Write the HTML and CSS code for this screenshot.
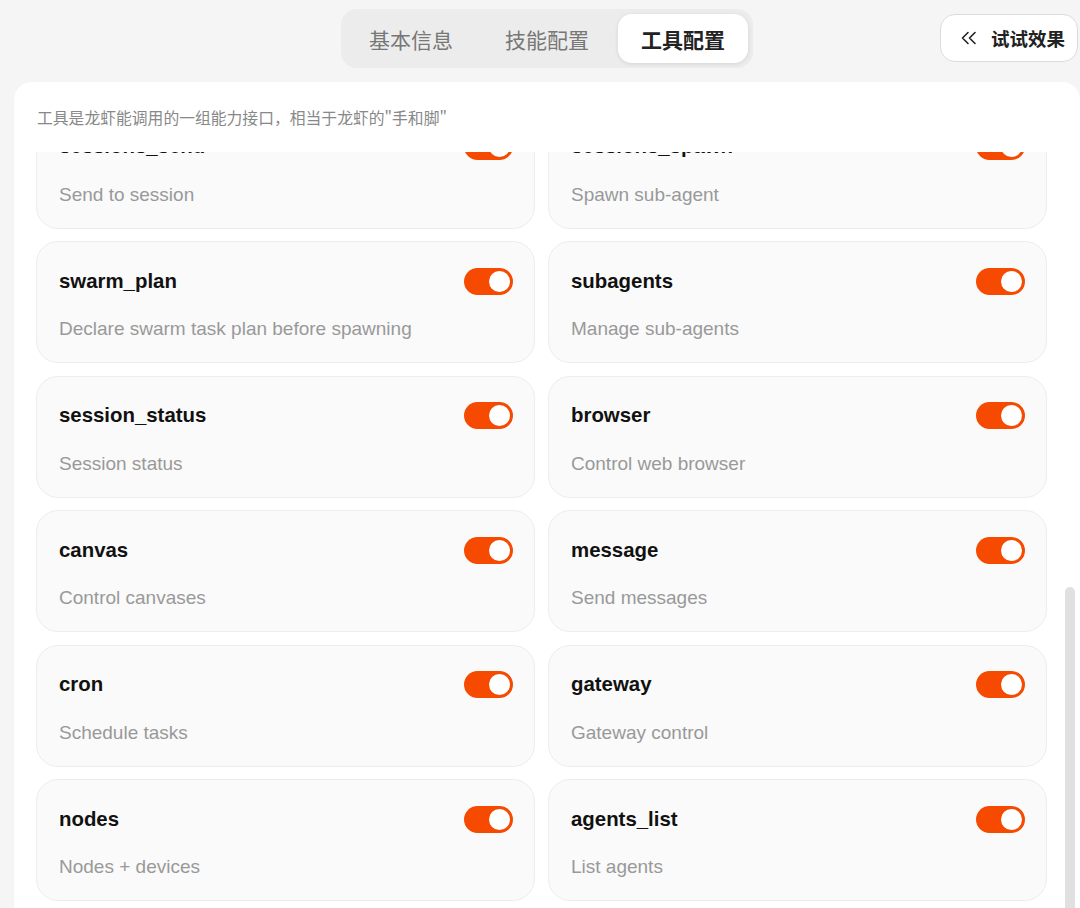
FILE: index.html
```html
<!DOCTYPE html>
<html lang="zh-CN">
    <head>
        <meta charset="UTF-8" />
        <meta name="viewport" content="width=device-width, initial-scale=1.0" />
        <title>工具配置</title>
        <link rel="stylesheet" href="styles.css">
    </head>
    <body>
        <header class="topbar">
            <div class="spacer"></div>
            <nav class="tabs">
                <span class="tab">基本信息</span>
                <span class="tab">技能配置</span>
                <span class="tab active">工具配置</span>
            </nav>
            <div class="actions">
                <button class="try-btn">
                    <svg width="18" height="14" viewBox="0 0 18 14">
                        <path d="M8 1.5 L2.5 7 L8 12.5 M15 1.5 L9.5 7 L15 12.5" fill="none" stroke="#222" stroke-width="1.6" stroke-linecap="round" stroke-linejoin="round" />
                    </svg>
                    <span>试试效果</span>
                </button>
            </div>
        </header>

        <main class="panel">
            <p class="intro">工具是龙虾能调用的一组能力接口，相当于龙虾的"手和脚"</p>
            <div class="viewport">
                <div class="tool-grid">
                    <div class="tool">
                        <div class="tool-head"><h3>sessions_send</h3><span class="switch"></span></div>
                        <p>Send to session</p>
                    </div>
                    <div class="tool">
                        <div class="tool-head"><h3>sessions_spawn</h3><span class="switch"></span></div>
                        <p>Spawn sub-agent</p>
                    </div>
                    <div class="tool">
                        <div class="tool-head"><h3>swarm_plan</h3><span class="switch"></span></div>
                        <p>Declare swarm task plan before spawning</p>
                    </div>
                    <div class="tool">
                        <div class="tool-head"><h3>subagents</h3><span class="switch"></span></div>
                        <p>Manage sub-agents</p>
                    </div>
                    <div class="tool">
                        <div class="tool-head"><h3>session_status</h3><span class="switch"></span></div>
                        <p>Session status</p>
                    </div>
                    <div class="tool">
                        <div class="tool-head"><h3>browser</h3><span class="switch"></span></div>
                        <p>Control web browser</p>
                    </div>
                    <div class="tool">
                        <div class="tool-head"><h3>canvas</h3><span class="switch"></span></div>
                        <p>Control canvases</p>
                    </div>
                    <div class="tool">
                        <div class="tool-head"><h3>message</h3><span class="switch"></span></div>
                        <p>Send messages</p>
                    </div>
                    <div class="tool">
                        <div class="tool-head"><h3>cron</h3><span class="switch"></span></div>
                        <p>Schedule tasks</p>
                    </div>
                    <div class="tool">
                        <div class="tool-head"><h3>gateway</h3><span class="switch"></span></div>
                        <p>Gateway control</p>
                    </div>
                    <div class="tool">
                        <div class="tool-head"><h3>nodes</h3><span class="switch"></span></div>
                        <p>Nodes + devices</p>
                    </div>
                    <div class="tool">
                        <div class="tool-head"><h3>agents_list</h3><span class="switch"></span></div>
                        <p>List agents</p>
                    </div>
                </div>
                <div class="scroll-thumb"></div>
            </div>
        </main>
    </body>
</html>
```

FILE: styles.css
```css
* {
    margin: 0;
    padding: 0;
    box-sizing: border-box;
}
html,
body {
    height: 100%;
}
body {
    overflow: hidden;
    background-color: #f5f5f5;
    font-family: "Liberation Sans", "Noto Sans CJK SC", sans-serif;
    display: flex;
    flex-direction: column;
}
.topbar {
    display: grid;
    grid-template-columns: 1fr auto 1fr;
    align-items: start;
    padding: 9px 0 0 14px;
    height: 82px;
    flex-shrink: 0;
}
.tabs {
    display: flex;
    gap: 6px;
    padding: 5px;
    background-color: #ececec;
    border-radius: 16px;
}
.tab {
    width: 130px;
    height: 49px;
    display: flex;
    align-items: center;
    justify-content: center;
    font-family: "Noto Sans CJK SC", sans-serif;
    font-size: 21px;
    color: #777;
}
.tab.active {
    background-color: #fff;
    border-radius: 14px;
    color: #222;
    font-weight: 700;
    box-shadow: 0 1px 4px rgba(0, 0, 0, 0.1);
}
.actions {
    display: flex;
    justify-content: flex-end;
    padding: 5px 2px 0 0;
}
.try-btn {
    width: 138px;
    height: 48px;
    display: flex;
    align-items: center;
    gap: 13px;
    padding-left: 19px;
    background-color: #fff;
    border: 1px solid #dcdcdc;
    border-radius: 15px;
    font-family: "Noto Sans CJK SC", sans-serif;
    font-size: 18.5px;
    font-weight: 700;
    color: #222;
}
.panel {
    flex: 1;
    margin-left: 14px;
    background-color: #fff;
    border-radius: 18px 18px 0 0;
    display: flex;
    flex-direction: column;
    min-height: 0;
}
.intro {
    height: 70px;
    padding: 26px 0 0 23px;
    line-height: 20px;
    font-family: "Noto Sans CJK SC", sans-serif;
    font-size: 15.8px;
    color: #888;
    flex-shrink: 0;
}
.viewport {
    flex: 1;
    position: relative;
    overflow: hidden;
    padding: 0 33px 0 22px;
}
.tool-grid {
    margin-top: -45.5px;
    display: grid;
    grid-template-columns: 1fr 1fr;
    column-gap: 13px;
    row-gap: 12.5px;
}
.tool {
    height: 122px;
    padding: 26px 21px 0 22px;
    background-color: #fafafa;
    border: 1px solid #ededed;
    border-radius: 22px;
}
.tool-head {
    display: flex;
    align-items: center;
    justify-content: space-between;
    height: 26px;
}
.tool h3 {
    font-size: 20.4px;
    font-weight: 700;
    color: #111;
}
.tool p {
    margin-top: 23px;
    line-height: 24px;
    font-size: 19px;
    color: #999;
}
.switch {
    position: relative;
    width: 49px;
    height: 27px;
    border-radius: 14px;
    background-color: #f54a00;
}
.switch::after {
    content: "";
    position: absolute;
    top: 3px;
    right: 3px;
    width: 21px;
    height: 21px;
    border-radius: 50%;
    background-color: #fff;
}
.scroll-thumb {
    position: absolute;
    top: 435px;
    right: 5px;
    width: 10px;
    height: 400px;
    border-radius: 5px;
    background-color: #e0e0e0;
}
```
